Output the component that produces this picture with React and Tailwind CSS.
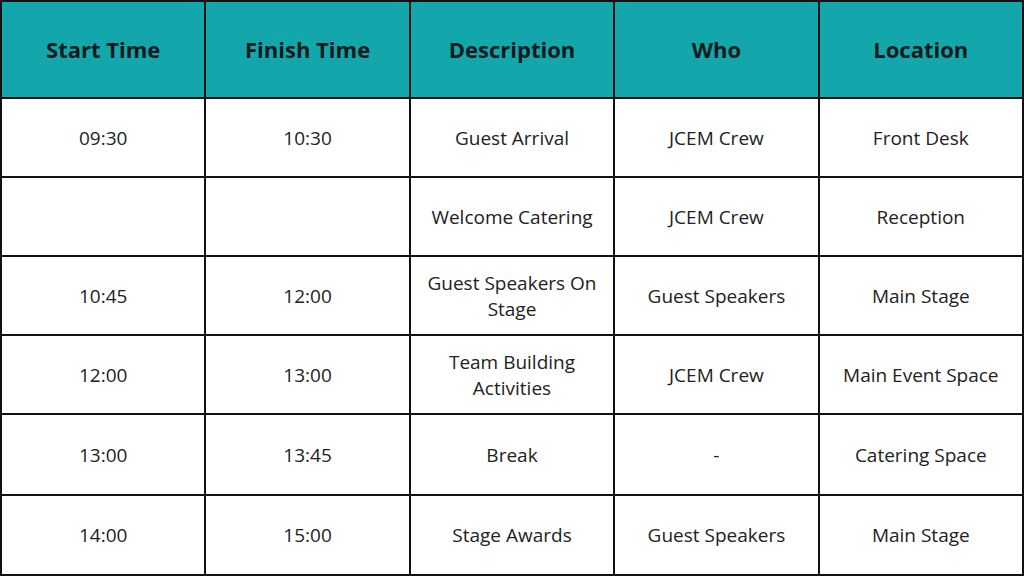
const headers = ['Start Time', 'Finish Time', 'Description', 'Who', 'Location'];

const rows = [
  ['09:30', '10:30', 'Guest Arrival', 'JCEM Crew', 'Front Desk'],
  ['', '', 'Welcome Catering', 'JCEM Crew', 'Reception'],
  ['10:45', '12:00', 'Guest Speakers On Stage', 'Guest Speakers', 'Main Stage'],
  ['12:00', '13:00', 'Team Building Activities', 'JCEM Crew', 'Main Event Space'],
  ['13:00', '13:45', 'Break', '-', 'Catering Space'],
  ['14:00', '15:00', 'Stage Awards', 'Guest Speakers', 'Main Stage'],
];

export default function App() {
  return (
    <div
      className="w-[1024px] h-[576px] bg-white"
      style={{ fontFamily: '"Open Sans", "Noto Sans", sans-serif' }}
    >
      <div className="grid h-full grid-cols-5 grid-rows-[95px_77px_77px_77px_77px_79px_78px] gap-[2px] bg-[#111] p-[2px]">
        {headers.map((h) => (
          <div
            key={h}
            className="flex items-center justify-center bg-[#13a7ac] text-[22px] font-bold text-[#0f1a1c]"
          >
            {h}
          </div>
        ))}
        {rows.map((row, i) =>
          row.map((cell, j) => (
            <div
              key={`${i}-${j}`}
              className="flex items-center justify-center bg-white px-4 text-center text-[19px] leading-[26px] text-[#222]"
            >
              {cell}
            </div>
          ))
        )}
      </div>
    </div>
  );
}
